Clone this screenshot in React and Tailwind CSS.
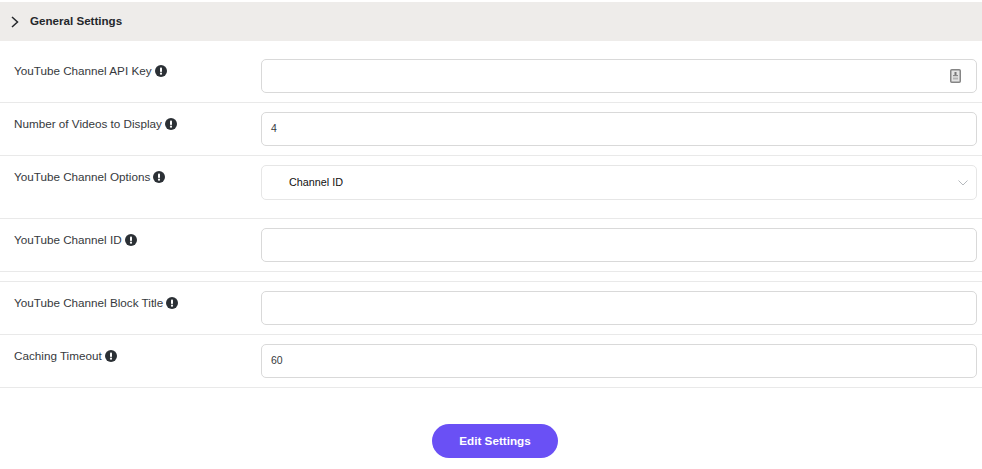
import React from 'react';

function InfoIcon() {
  return (
    <svg width="12" height="12" viewBox="0 0 12 12" className="ml-[3px] shrink-0">
      <circle cx="6" cy="6" r="6" fill="#2b3035" />
      <rect x="5" y="2.4" width="2" height="4.6" rx="0.8" fill="#fff" />
      <circle cx="6" cy="8.7" r="1.1" fill="#fff" />
    </svg>
  );
}

function CardIcon() {
  return (
    <svg width="11" height="14" viewBox="0 0 11 14" className="shrink-0">
      <rect x="0.75" y="0.75" width="9.5" height="12.5" rx="1" fill="#e4e4e4" stroke="#858585" strokeWidth="1.5" />
      <rect x="4.5" y="3" width="2" height="3" fill="#777" />
      <rect x="3" y="6" width="5" height="1.2" fill="#888" />
      <rect x="3" y="8.5" width="5" height="2" fill="#b5b5b5" />
    </svg>
  );
}

function Row({ label, pad = 'pb-[9px]', children }) {
  return (
    <div className={`flex border-b border-[#e9e9e9] pt-[9px] pr-[5px] ${pad}`}>
      <div className="w-[261px] shrink-0 pl-[14px] pt-[3px] flex items-start">
        <div className="flex items-center h-[18px] text-[11.7px] text-[#36393d]">
          <span>{label}</span>
          <InfoIcon />
        </div>
      </div>
      <div className="flex-1">{children}</div>
    </div>
  );
}

function Field({ value, icon }) {
  return (
    <div className="h-[34px] border border-[#d9d9d9] rounded-[5px] bg-white flex items-center justify-between pl-[9px] pr-[15px] text-[10.5px] text-[#36393d]">
      <span>{value}</span>
      {icon}
    </div>
  );
}

export default function App() {
  return (
    <div className="w-[982px] h-[469px] bg-white overflow-hidden font-['Liberation_Sans',Arial,sans-serif]">
      <div className="mt-[2px] h-[39px] bg-[#eeecea] flex items-center pl-[11px] text-[11.6px] font-bold text-[#24272b]">
        <svg width="8" height="12" viewBox="0 0 8 12" fill="none" stroke="#24272b" strokeWidth="1.5">
          <path d="M1 1l5.5 5L1 11" />
        </svg>
        <span className="ml-[11px] mb-[2px]">General Settings</span>
      </div>

      <Row label="YouTube Channel API Key" pad="pt-[18px] pb-[9px]">
        <Field icon={<CardIcon />} />
      </Row>
      <Row label="Number of Videos to Display">
        <Field value="4" />
      </Row>
      <Row label="YouTube Channel Options" pad="pb-[18px]">
        <div className="h-[35px] border border-[#e6e6e6] rounded-[5px] bg-white flex items-center justify-between pl-[27px] pr-[8px] text-[10.8px] text-[#111]">
          <span>Channel ID</span>
          <svg width="10" height="6" viewBox="0 0 10 6" fill="none" stroke="#b5b9bd" strokeWidth="1">
            <path d="M0.5 0.5L5 5l4.5-4.5" />
          </svg>
        </div>
      </Row>
      <Row label="YouTube Channel ID">
        <Field />
      </Row>
      <div className="h-[10px] border-b border-[#e9e9e9]" />
      <Row label="YouTube Channel Block Title">
        <Field />
      </Row>
      <Row label="Caching Timeout">
        <Field value="60" />
      </Row>

      <div className="flex justify-center pt-[36px] pl-[8px]">
        <button className="w-[126px] h-[34px] rounded-full bg-[#6a50f5] text-white text-[11.7px] font-bold">
          Edit Settings
        </button>
      </div>
    </div>
  );
}
